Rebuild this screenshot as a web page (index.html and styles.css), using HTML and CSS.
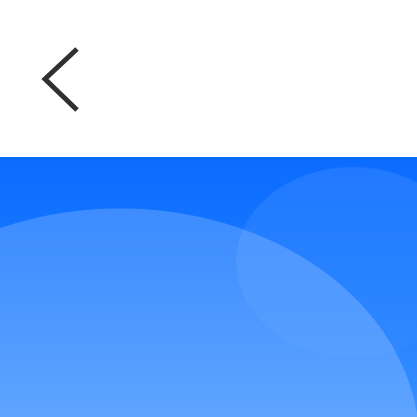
FILE: index.html
```html
<!DOCTYPE html>
<html lang="en">
<head>
<meta charset="utf-8">
<title>Back</title>
<link rel="stylesheet" href="styles.css">
</head>
<body>
<div class="page">
  <header class="topbar">
    <button class="back" aria-label="Back">
      <svg width="40" height="70" viewBox="0 0 40 70" aria-hidden="true">
        <polyline points="37,5 5,35 37,66" fill="none" stroke="#303030" stroke-width="5" stroke-linecap="butt" stroke-linejoin="miter"/>
      </svg>
    </button>
  </header>
  <section class="hero">
    <div class="bubble"></div>
  </section>
</div>
</body>
</html>
```

FILE: styles.css
```css
html, body {
  margin: 0;
  padding: 0;
  background: #ffffff;
  font-family: "Liberation Sans", Arial, sans-serif;
}
.page {
  width: 417px;
  height: 417px;
  display: flex;
  flex-direction: column;
  overflow: hidden;
}
.topbar {
  height: 157px;
  flex: none;
  display: flex;
  align-items: flex-start;
  padding: 44px 0 0 40px;
  box-sizing: border-box;
  background: #ffffff;
}
.back {
  border: 0;
  background: none;
  padding: 0;
  margin: 0;
  width: 40px;
  height: 70px;
  display: block;
  cursor: pointer;
}
.back svg {
  display: block;
}
.hero {
  flex: 1;
  position: relative;
  overflow: hidden;
  background:
    radial-gradient(300px 236px at 120px 287px, rgba(255,255,255,0.19) 99.6%, rgba(255,255,255,0) 100%),
    linear-gradient(180deg, #0a6bff 0%, #1a7aff 45%, #3a90ff 100%);
}
.bubble {
  position: absolute;
  left: 236px;
  top: 10px;
  width: 234px;
  height: 190px;
  border-radius: 50%;
  background: linear-gradient(180deg, rgba(255,255,255,0.09) 0%, rgba(255,255,255,0.06) 55%, rgba(255,255,255,0.02) 100%);
}
```
